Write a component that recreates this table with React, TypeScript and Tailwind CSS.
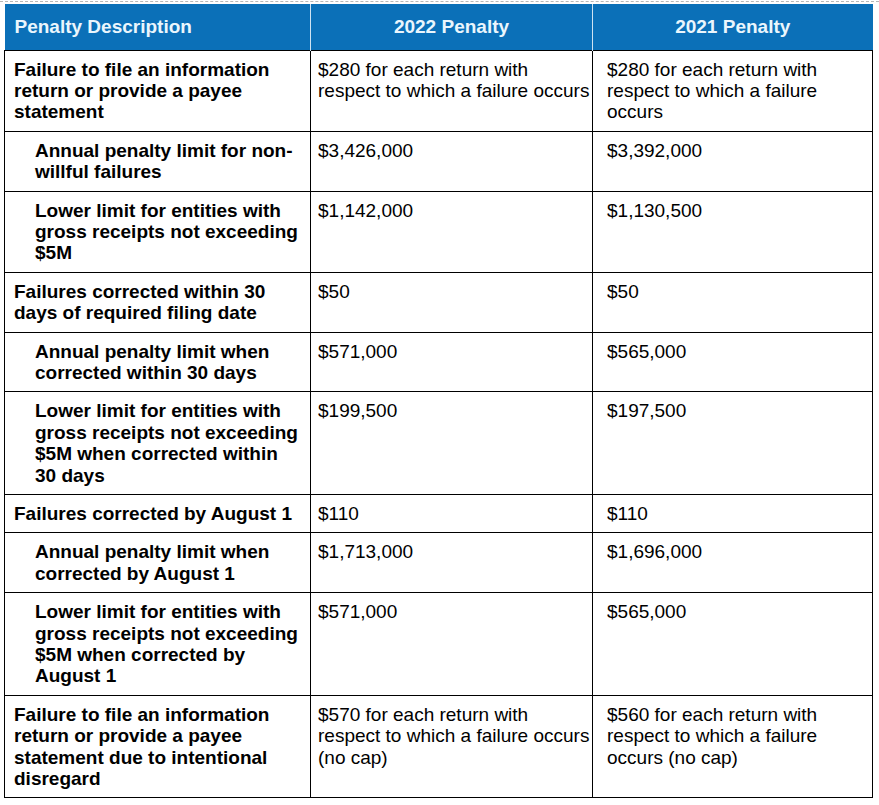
import React from 'react';

type Row = {
  label: string;
  indent?: boolean;
  y2022: string;
  y2021: string;
};

const rows: Row[] = [
  {
    label: 'Failure to file an information return or provide a payee statement',
    y2022: '$280 for each return with respect to which a failure occurs',
    y2021: '$280 for each return with respect to which a failure occurs',
  },
  { label: 'Annual penalty limit for non-willful failures', indent: true, y2022: '$3,426,000', y2021: '$3,392,000' },
  {
    label: 'Lower limit for entities with gross receipts not exceeding $5M',
    indent: true,
    y2022: '$1,142,000',
    y2021: '$1,130,500',
  },
  { label: 'Failures corrected within 30 days of required filing date', y2022: '$50', y2021: '$50' },
  { label: 'Annual penalty limit when corrected within 30 days', indent: true, y2022: '$571,000', y2021: '$565,000' },
  {
    label: 'Lower limit for entities with gross receipts not exceeding $5M when corrected within 30 days',
    indent: true,
    y2022: '$199,500',
    y2021: '$197,500',
  },
  { label: 'Failures corrected by August 1', y2022: '$110', y2021: '$110' },
  { label: 'Annual penalty limit when corrected by August 1', indent: true, y2022: '$1,713,000', y2021: '$1,696,000' },
  {
    label: 'Lower limit for entities with gross receipts not exceeding $5M when corrected by August 1',
    indent: true,
    y2022: '$571,000',
    y2021: '$565,000',
  },
  {
    label: 'Failure to file an information return or provide a payee statement due to intentional disregard',
    y2022: '$570 for each return with respect to which a failure occurs (no cap)',
    y2021: '$560 for each return with respect to which a failure occurs (no cap)',
  },
];

export default function App() {
  return (
    <div className="min-h-screen bg-white font-['Liberation_Sans',Arial,sans-serif] text-[19px] leading-[21.4px] text-black">
      {/* scan artifact line above the table */}
      <div className="h-[3px] border-t border-dashed border-[#b8b8b8] mt-[1px]" />
      <div className="pl-[4px]">
        <table className="w-[868px] table-fixed border-collapse">
          <colgroup>
            <col className="w-[306px]" />
            <col className="w-[282px]" />
            <col className="w-[280px]" />
          </colgroup>
          <thead>
            <tr className="h-[46px] bg-[#0b70b8] text-[#eaf6fd] font-bold">
              <th className="pl-[10px] text-left align-middle border-r border-[#cfe3f2]">Penalty Description</th>
              <th className="text-center align-middle border-r border-[#cfe3f2]">2022 Penalty</th>
              <th className="text-center align-middle">2021 Penalty</th>
            </tr>
          </thead>
          <tbody>
            {rows.map((r, i) => (
              <tr key={i}>
                <td
                  className={`border border-black align-top pt-[8px] pb-[8px] pr-[10px] font-bold ${
                    r.indent ? 'pl-[30px]' : 'pl-[9px]'
                  }`}
                >
                  {r.label}
                </td>
                <td className="border border-black align-top pt-[8px] pb-[8px] pl-[7px] pr-0">{r.y2022}</td>
                <td className="border border-black align-top pt-[8px] pb-[8px] pl-[14px] pr-[4px]">{r.y2021}</td>
              </tr>
            ))}
          </tbody>
        </table>
      </div>
    </div>
  );
}
